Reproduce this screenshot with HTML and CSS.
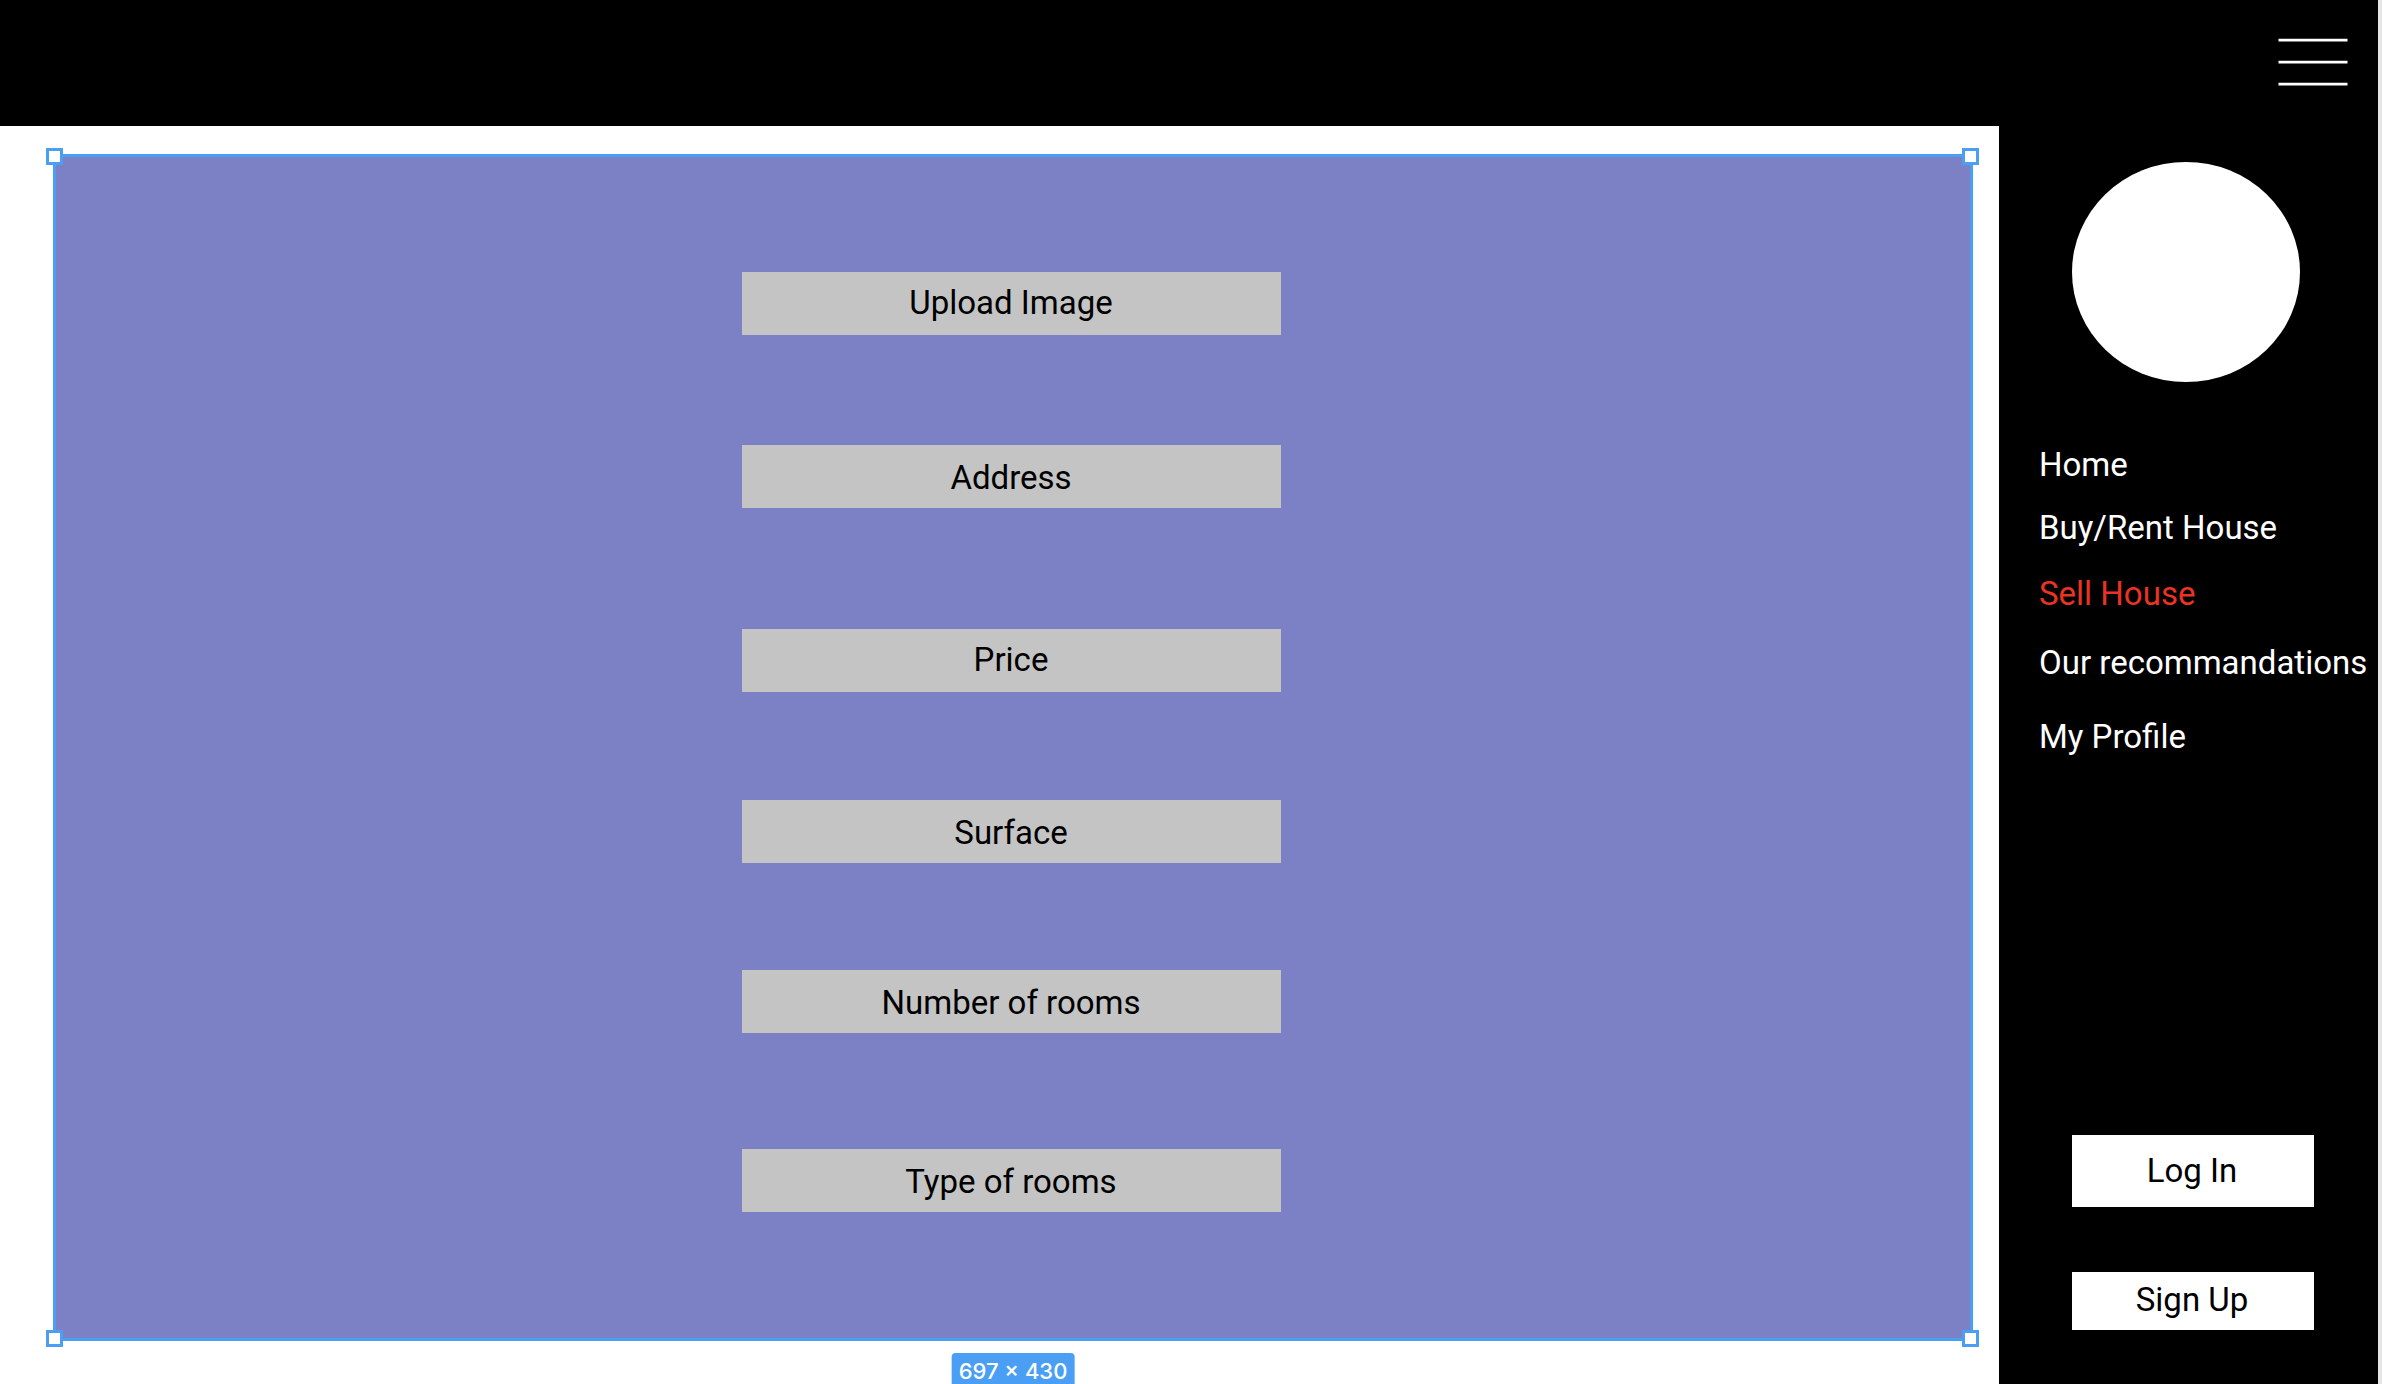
FILE: index.html
```html
<!DOCTYPE html>
<html lang="en">
<head>
  <meta charset="utf-8">
  <meta name="viewport" content="width=device-width, initial-scale=1">
  <title>Sell House</title>
  <link rel="stylesheet" href="styles.css">
</head>
<body>
  <div class="app">
    <header class="topbar">
      <button class="menu-button" type="button" aria-label="Menu">
        <svg class="menu-icon" viewBox="0 0 70 48" aria-hidden="true">
          <path d="M.5 2H69.5M.5 24H69.5M.5 46H69.5" fill="none" stroke="#fff" stroke-width="2.75"/>
        </svg>
      </button>
    </header>
    <div class="content">
      <main class="stage">
        <form class="panel">
          <button class="field field-upload" type="button">Upload Image</button>
          <input class="field field-address" type="text" placeholder="Address" aria-label="Address">
          <input class="field field-price" type="text" placeholder="Price" aria-label="Price">
          <input class="field field-surface" type="text" placeholder="Surface" aria-label="Surface">
          <input class="field field-number" type="text" placeholder="Number of rooms" aria-label="Number of rooms">
          <input class="field field-type" type="text" placeholder="Type of rooms" aria-label="Type of rooms">
          <span class="handle handle-tl"></span>
          <span class="handle handle-tr"></span>
          <span class="handle handle-bl"></span>
          <span class="handle handle-br"></span>
          <span class="size-badge">697 × 430</span>
        </form>
      </main>
      <aside class="sidebar">
        <div class="avatar"></div>
        <nav class="nav">
          <a class="nav-link" href="#home">Home</a>
          <a class="nav-link nav-buy" href="#buy">Buy/Rent House</a>
          <a class="nav-link nav-sell" href="#sell" aria-current="page">Sell House</a>
          <a class="nav-link nav-picks" href="#recommandations">Our recommandations</a>
          <a class="nav-link nav-profile" href="#profile">My Profile</a>
        </nav>
        <div class="account">
          <button class="account-button login" type="button">Log In</button>
          <button class="account-button signup" type="button">Sign Up</button>
        </div>
      </aside>
    </div>
  </div>
</body>
</html>
```
FILE: styles.css
```css
* {
  box-sizing: border-box;
}

body {
  margin: 0;
  font-family: Roboto, sans-serif;
  font-size: 33px;
  line-height: 40px;
  color: #000;
  background: #fff;
}

button,
input {
  margin: 0;
  border: 0;
  border-radius: 0;
  padding: 0;
  font: inherit;
  color: inherit;
}

.app {
  display: flex;
  flex-direction: column;
  min-height: 100vh;
  border-right: 4px solid #e5e5e5;
}

.topbar {
  display: flex;
  justify-content: flex-end;
  padding: 38px 30px 40px;
  background: #000;
}

.menu-button {
  display: flex;
  background: none;
}

.menu-icon {
  width: 70px;
  height: 48px;
}

.content {
  display: flex;
  flex: 1;
}

.stage {
  display: flex;
  flex: 1;
  min-width: 0;
  padding: 28px 26px 43px 53px;
  overflow: hidden;
}

/* Selected frame */
.panel {
  position: relative;
  display: flex;
  flex: 1;
  flex-direction: column;
  align-items: center;
  padding: 115px 4px 115px 0;
  border: 3px solid #4a9ff5;
  background: #7c80c4;
}

.field {
  width: 100%;
  max-width: 539px;
  height: 63px;
  padding-top: 2px;
  background: #c4c4c4;
  text-align: center;
}

.field::placeholder {
  color: #000;
  opacity: 1;
}

.field-upload,
.field-price {
  padding-top: 0;
  padding-bottom: 2px;
}

.field-address {
  margin-top: 110px;
}

.field-price {
  margin-top: 121px;
}

.field-surface {
  margin-top: 108px;
}

.field-number {
  margin-top: 107px;
}

.field-type {
  margin-top: 116px;
}

.handle {
  position: absolute;
  width: 17px;
  height: 17px;
  border: 3px solid #4a9ff5;
  background: #fff;
}

.handle-tl {
  top: -9px;
  left: -10px;
}

.handle-tr {
  top: -9px;
  right: -9px;
}

.handle-bl {
  bottom: -9px;
  left: -10px;
}

.handle-br {
  bottom: -9px;
  right: -9px;
}

.size-badge {
  position: absolute;
  top: calc(100% + 15px);
  left: 50%;
  padding: 0 7px;
  border-radius: 4px;
  background: #4a9ff5;
  color: #fff;
  font-family: Inter, sans-serif;
  font-size: 22px;
  font-weight: 500;
  line-height: 36px;
  white-space: nowrap;
  transform: translateX(-50%);
}

.sidebar {
  display: flex;
  flex: none;
  flex-direction: column;
  width: 379px;
  padding-top: 36px;
  padding-bottom: 54px;
  background: #000;
}

.avatar {
  width: 228px;
  height: 220px;
  margin-left: 73px;
  border-radius: 50%;
  background: #fff;
}

.nav {
  display: flex;
  flex-direction: column;
  align-items: flex-start;
  margin-top: 63px;
  padding-left: 40px;
}

.nav-link {
  color: #fff;
  text-decoration: none;
  white-space: nowrap;
}

.nav-buy {
  margin-top: 23px;
}

.nav-sell {
  margin-top: 26px;
  color: #eb3323;
}

.nav-picks {
  margin-top: 29px;
}

.nav-profile {
  margin-top: 34px;
}

.account {
  display: flex;
  flex-direction: column;
  gap: 65px;
  margin-top: auto;
  padding-left: 73px;
}

.account-button {
  width: 242px;
  padding-right: 2px;
  background: #fff;
}

.login {
  height: 72px;
}

.signup {
  height: 58px;
  padding-bottom: 2px;
}
```
